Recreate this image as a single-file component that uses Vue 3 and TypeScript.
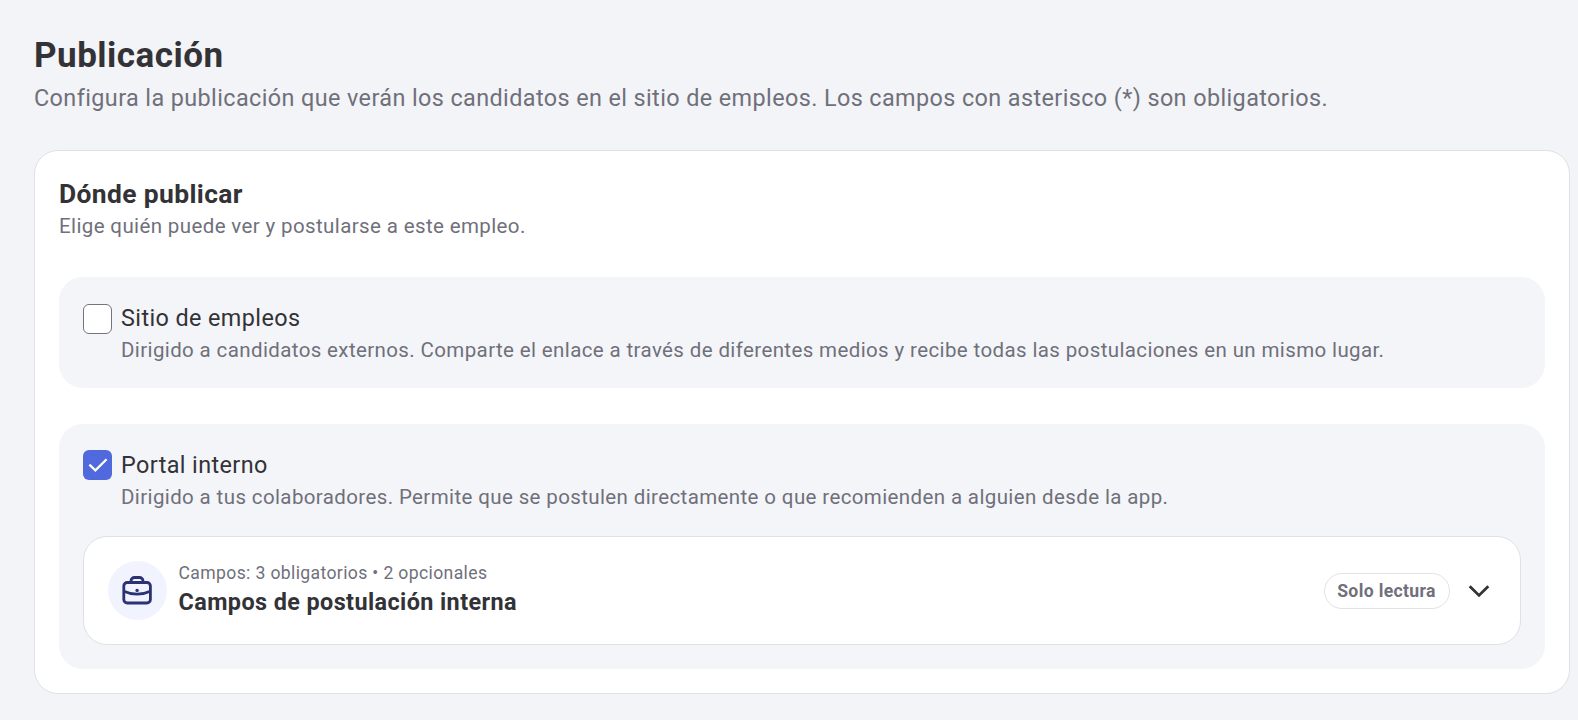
<script setup lang="ts">
import { ref } from 'vue'

interface Channel {
  id: string
  label: string
  description: string
  checked: boolean
  fields?: { required: number; optional: number; title: string }
}

const channels = ref<Channel[]>([
  {
    id: 'site',
    label: 'Sitio de empleos',
    description:
      'Dirigido a candidatos externos. Comparte el enlace a través de diferentes medios y recibe todas las postulaciones en un mismo lugar.',
    checked: false
  },
  {
    id: 'internal',
    label: 'Portal interno',
    description:
      'Dirigido a tus colaboradores. Permite que se postulen directamente o que recomienden a alguien desde la app.',
    checked: true,
    fields: { required: 3, optional: 2, title: 'Campos de postulación interna' }
  }
])
</script>

<template>
  <main class="page">
    <h1 class="title">Publicación</h1>
    <p class="subtitle">
      Configura la publicación que verán los candidatos en el sitio de empleos. Los campos con asterisco (*) son obligatorios.
    </p>

    <section class="card">
      <h2 class="card-title">Dónde publicar</h2>
      <p class="card-subtitle">Elige quién puede ver y postularse a este empleo.</p>

      <div v-for="channel in channels" :key="channel.id" class="channel">
        <div class="channel-row">
          <button
            type="button"
            role="checkbox"
            class="checkbox"
            :class="{ checked: channel.checked }"
            :aria-checked="channel.checked"
            :aria-label="channel.label"
            @click="channel.checked = !channel.checked"
          >
            <svg v-if="channel.checked" viewBox="0 0 30 30" aria-hidden="true">
              <path d="M6.5 14.9 12.6 20.7 24 9.4" />
            </svg>
          </button>
          <div>
            <p class="channel-label">{{ channel.label }}</p>
            <p class="channel-text">{{ channel.description }}</p>
          </div>
        </div>

        <div v-if="channel.fields" class="fields">
          <span class="fields-icon">
            <svg viewBox="0 0 36 36" aria-hidden="true">
              <rect x="4.8" y="9.5" width="26.6" height="20.5" rx="3.5" />
              <path d="M12 9.5V8a3.5 3.5 0 0 1 3.5-3.5h5A3.5 3.5 0 0 1 24 8v1.5" />
              <path d="M4.8 18.2Q18.1 24.2 31.4 18.2" />
              <circle cx="18.1" cy="17.4" r="1.7" />
            </svg>
          </span>
          <div class="fields-text">
            <p class="fields-count">
              Campos: {{ channel.fields.required }} obligatorios • {{ channel.fields.optional }} opcionales
            </p>
            <h3 class="fields-title">{{ channel.fields.title }}</h3>
          </div>
          <span class="badge">Solo lectura</span>
          <svg class="chevron" viewBox="0 0 36 36" aria-hidden="true">
            <path d="M8.7 13.2 18 22.4 27.3 13.2" />
          </svg>
        </div>
      </div>
    </section>
  </main>
</template>

<style>
body {
  background: #f3f4f7;
}
</style>

<style scoped>
.page {
  box-sizing: border-box;
  min-height: 100vh;
  padding: 36px 8px 26px 34px;
  font-family: Roboto, "Liberation Sans", sans-serif;
  color: #323237;
  background: #f3f4f7;
}

.page * {
  box-sizing: border-box;
}

h1,
h2,
h3,
p {
  margin: 0;
}

.title {
  font-size: 35px;
  line-height: 40px;
  font-weight: 700;
  letter-spacing: 0.5px;
}

.subtitle {
  margin-top: 4px;
  font-size: 23.4px;
  line-height: 36px;
  letter-spacing: 0.4px;
  color: #6f707b;
}

.card {
  margin-top: 34px;
  padding: 25px 24px 24px;
  background: #fff;
  border: 1px solid #e0e1e7;
  border-radius: 24px;
}

.card-title {
  font-size: 26.4px;
  line-height: 36px;
  font-weight: 700;
  letter-spacing: 0.38px;
}

.card-subtitle {
  font-size: 20.5px;
  line-height: 29px;
  letter-spacing: 0.38px;
  color: #6f707b;
}

.channel {
  margin-top: 36px;
  padding: 24px 24px 23px 23.5px;
  background: #f4f5f8;
  border-radius: 24px;
}

.channel:last-child {
  padding-bottom: 24px;
}

.channel-row {
  display: flex;
  gap: 9px;
}

.checkbox {
  flex: none;
  width: 29.5px;
  height: 29.5px;
  margin-top: 3px;
  padding: 0;
  background: #fff;
  border: 1.5px solid #73747e;
  border-radius: 6px;
}

.channel:last-child .checkbox {
  margin-top: 2px;
}

.checkbox.checked {
  background: #5069dc;
  border: 0;
}

.checkbox svg {
  display: block;
  width: 29.5px;
  height: 29.5px;
  fill: none;
  stroke: #fff;
  stroke-width: 2.3;
}

.channel-label {
  font-size: 23.4px;
  line-height: 35px;
  letter-spacing: 0.4px;
}

.channel-text {
  font-size: 20.5px;
  line-height: 29px;
  letter-spacing: 0.38px;
  color: #6f707b;
}

.fields {
  display: flex;
  align-items: center;
  height: 109px;
  margin-top: 24px;
  padding: 0 23.5px 0 24px;
  background: #fff;
  border: 1px solid #e0e1e7;
  border-radius: 24px;
}

.fields-icon {
  display: flex;
  align-items: center;
  justify-content: center;
  width: 59px;
  height: 59px;
  margin-right: 12px;
  background: #f1f3ff;
  border-radius: 50%;
}

.fields-icon svg {
  width: 36px;
  height: 36px;
  fill: none;
  stroke: #2b3273;
  stroke-width: 2.8;
}

.fields-icon circle {
  fill: #2b3273;
  stroke: none;
}

.fields-text {
  flex: 1;
}

.fields-count {
  font-size: 17.6px;
  line-height: 24px;
  letter-spacing: 0.36px;
  color: #6f707b;
}

.fields-title {
  font-size: 23.4px;
  line-height: 35px;
  font-weight: 700;
  letter-spacing: 0.41px;
}

.badge {
  display: flex;
  align-items: center;
  justify-content: center;
  width: 126px;
  height: 36px;
  font-size: 17.6px;
  font-weight: 700;
  letter-spacing: 0.35px;
  color: #6f707b;
  border: 1px solid #e1e2e8;
  border-radius: 18px;
}

.chevron {
  width: 36px;
  height: 36px;
  margin-left: 11px;
  fill: none;
  stroke: #323237;
  stroke-width: 2.8;
}
</style>
